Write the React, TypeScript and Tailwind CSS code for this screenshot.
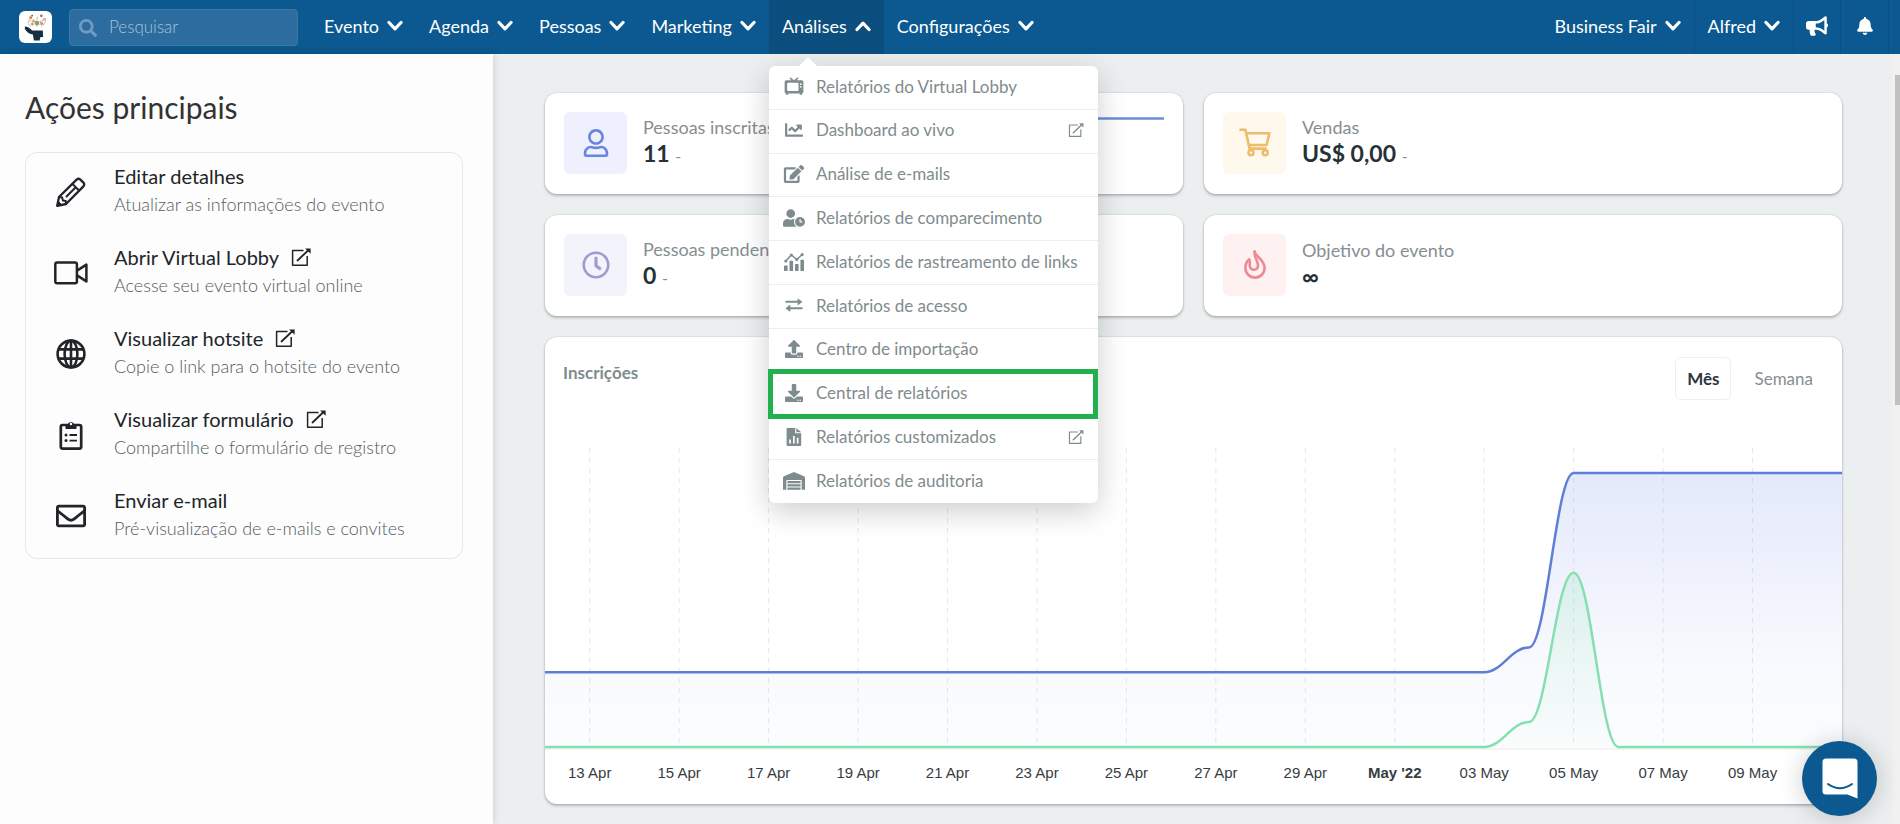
import type { ReactNode } from "react";
import {
  FaBell,
  FaBullhorn,
  FaChartLine,
  FaDownload,
  FaEdit,
  FaRegClock,
  FaRegEnvelope,
  FaRegUser,
  FaSearch,
  FaUpload,
  FaUserClock,
  FaWarehouse,
} from "react-icons/fa";

type IconProps = { className?: string };

/* Icons */

function Chevron({ up = false }: { up?: boolean }) {
  return (
    <svg viewBox="0 0 16 12" className="w-4 h-3" fill="none" stroke="currentColor" strokeWidth="3.2" strokeLinecap="round" strokeLinejoin="round">
      <path d={up ? "M2 9.5 8 3.2l6 6.3" : "M2 2.5l6 6.3 6-6.3"} />
    </svg>
  );
}

function ExternalIcon({ className }: IconProps) {
  return (
    <svg viewBox="0 0 20 18" className={className} fill="none" stroke="currentColor" strokeWidth="1.5" strokeLinejoin="round">
      <path d="M12.5 2.6H1.6v14.6h14.6V8" />
      <path d="M6.5 12.5 17 2.5" strokeLinecap="round" strokeWidth="1.8" />
      <path d="M14 .4h5.6v5.4z" fill="currentColor" stroke="none" />
    </svg>
  );
}

function PencilIcon({ className }: IconProps) {
  return (
    <svg viewBox="0 0 30 30" className={className} fill="none" stroke="currentColor" strokeWidth="2.3" strokeLinejoin="round" strokeLinecap="round">
      <path d="M1.2 28.8 3 20 20.6 2.6q1.9-1.6 3.8 0l3 3q1.6 1.9 0 3.8L10 27z" />
      <path d="M3 20l3.2.4.6 3 3 .6.2 3M16.5 7l6.5 6.5M10.5 19.5l8-8" strokeWidth="2" />
      <path d="M1.2 28.8l1-4.6 3.6 3.6z" fill="currentColor" strokeWidth="1" />
    </svg>
  );
}

function VideoIcon({ className }: IconProps) {
  return (
    <svg viewBox="0 0 34 30" className={className} fill="none" stroke="currentColor" strokeWidth="2.5" strokeLinejoin="round">
      <rect x="1.3" y="4.6" width="21.6" height="20.6" rx="1.8" />
      <path d="M23 12.6 32.4 6.6v16.8L23 17.4" />
    </svg>
  );
}

function GlobeIcon({ className }: IconProps) {
  return (
    <svg viewBox="0 0 30 30" className={className} fill="none" stroke="currentColor" strokeWidth="2.6">
      <circle cx="15" cy="15" r="13.4" />
      <ellipse cx="15" cy="15" rx="6.4" ry="13.4" />
      <path d="M15 1.6v26.8M2.6 10.4h24.8M2.6 19.6h24.8" />
    </svg>
  );
}

function ClipboardIcon({ className }: IconProps) {
  return (
    <svg viewBox="0 0 24 30" className={className} fill="none" stroke="currentColor" strokeWidth="2.7">
      <rect x="1.8" y="5" width="20.4" height="23.6" rx="1.8" />
      <path d="M6.5 9V4.6h2.2a3.4 3.4 0 0 1 6.6 0h2.2V9z" fill="currentColor" stroke="none" />
      <circle cx="12" cy="4" r="1.2" fill="#fff" stroke="none" />
      <path d="M10.5 15h7.5M10.5 20.6h7.5" strokeWidth="1.8" />
      <circle cx="7" cy="15" r="1.5" fill="currentColor" stroke="none" />
      <circle cx="7" cy="20.6" r="1.5" fill="currentColor" stroke="none" />
    </svg>
  );
}

function CartIcon({ className }: IconProps) {
  return (
    <svg viewBox="0 0 32 29" className={className} fill="none" stroke="currentColor" strokeWidth="2.6" strokeLinejoin="round">
      <path d="M.4 1.8h6l4.2 18.8h17M7.4 5.2h23L27.6 17H9.8" />
      <circle cx="12" cy="24.8" r="2.5" />
      <circle cx="26.2" cy="24.8" r="2.5" />
    </svg>
  );
}

function FlameIcon({ className }: IconProps) {
  return (
    <svg viewBox="0 0 22 29" className={className} fill="none" stroke="currentColor" strokeWidth="2.6" strokeLinejoin="round" strokeLinecap="round">
      <path d="M10.6 1.6C10.8 6 20.6 9.4 20.6 18a9.6 9.6 0 0 1-19.2 0c0-4 1.4-6.4 3.4-8.2" />
      <path d="M10.6 1.6C10 7.4 13.8 10.6 14 15.2c.2 6-8 5.8-8.2.4-.1-2.4.6-4.2-.6-6.2" />
    </svg>
  );
}

function RetroTvIcon({ className }: IconProps) {
  return (
    <svg viewBox="0 1 20 18.4" className={className} fill="currentColor">
      <path d="M6.4 1.2 10 4.3l3.600-3.100 1 1.300L12.600 4.400H18a1.600 1.600 0 0 1 1.600 1.600v10.200a1.600 1.600 0 0 1-1.300 1.600v1.400h-2.400v-1.400H4.100v1.400H1.700v-1.400A1.600 1.600 0 0 1 .4 16.200V6A1.600 1.600 0 0 1 2 4.400h5.400L5.400 2.500zM4.200 6.800a1.200 1.200 0 0 0-1.200 1.200v6.200a1.200 1.200 0 0 0 1.200 1.200h9.200a1.200 1.200 0 0 0 1.200-1.200V8a1.200 1.200 0 0 0-1.200-1.200z" fillRule="evenodd" />
      <circle cx="17" cy="8.3" r=".9" fill="#fff" />
      <circle cx="17" cy="11" r=".9" fill="#fff" />
    </svg>
  );
}

function AnalyticsIcon({ className }: IconProps) {
  return (
    <svg viewBox="0 1 20 18" className={className} fill="currentColor">
      <rect x="0" y="13.6" width="3.6" height="5.4" rx=".6" />
      <rect x="5.5" y="8.8" width="3.6" height="10.2" rx=".6" />
      <rect x="11" y="12" width="3.6" height="7" rx=".6" />
      <rect x="16.4" y="7.8" width="3.6" height="11.2" rx=".6" />
      <path d="M1.8 9 7.3 3l5.5 4.5 5.4-5" fill="none" stroke="currentColor" strokeWidth="1.5" />
      <circle cx="1.8" cy="9" r="1.6" />
      <circle cx="7.3" cy="3" r="1.6" />
      <circle cx="12.8" cy="7.4" r="1.6" />
      <circle cx="18.2" cy="2.6" r="1.6" />
    </svg>
  );
}

function ExchangeIcon({ className }: IconProps) {
  return (
    <svg viewBox="0 0 20 20" className={className} fill="currentColor">
      <path d="M1 5.400h13V3.400q0-1 .8-.4l4 3q.6.500 0 1l-4 3q-.8.600-.8-.4V7.500H1q-.6 0-.6-.5V5.900Q.4 5.400 1 5.400z" />
      <path d="M19 12.500H6v-2q0-1-.8-.4l-4 3q-.6.500 0 1l4 3q.8.600.8-.4v-2.100h13q.6 0 .6-.5v-1.100q0-.5-.6-.5z" />
    </svg>
  );
}

function FileChartIcon({ className }: IconProps) {
  return (
    <svg viewBox="0 1 20 18" className={className} fill="currentColor">
      <path d="M3.600 1h7.600v5.200h6V18q0 1-1 1H3.600q-1 0-1-1V2q0-1 1-1zM5.200 12.400v4h1.700v-4zM9 9v7.400h1.700V9zM12.800 10.800v5.600h1.700v-5.600z" fillRule="evenodd" />
      <path d="M12.400 1l4.800 4.200h-4.800z" />
    </svg>
  );
}

function HeadLogo() {
  return (
    <svg viewBox="0 0 33 32" className="w-8 h-8">
      <path d="M5 15.500q4 .2 7.500 4.200h11l.4 6.500-3 .4-.6 3.400h-6l-1-6.200q-5-.6-8.300-5.800z" fill="#17303f" />
      <path d="M11 15.500q-4.500-4-.5-8.500M22 15.500q6-4 3.500-9.500M13.500 14.500V11M17.500 15.500V8M20.500 14l1.500-4M10 9.500l6 1.500M24 9l-5 2" fill="none" stroke="#a58d6d" strokeWidth=".8" strokeDasharray="1.500 .7" />
      <circle cx="11" cy="6.5" r="1.5" fill="#c98561" />
      <circle cx="14" cy="9.5" r="1.3" fill="#d8a45e" />
      <circle cx="17.5" cy="12" r="2.4" fill="#8f9a83" />
      <circle cx="22" cy="4.5" r="1.5" fill="#cd6a56" />
      <circle cx="25" cy="8" r="1.3" fill="#e0a78f" />
      <circle cx="22.5" cy="12.5" r="1.4" fill="#c98561" />
      <circle cx="12.5" cy="13" r="1.3" fill="#b9a55e" />
      <circle cx="12.5" cy="4.2" r=".9" fill="#44535c" />
      <circle cx="18" cy="6.5" r="1" fill="#e2bd85" />
    </svg>
  );
}

/* Header */

const menuItems = [
  { label: "Relatórios do Virtual Lobby", icon: RetroTvIcon },
  { label: "Dashboard ao vivo", icon: FaChartLine, external: true },
  { label: "Análise de e-mails", icon: FaEdit },
  { label: "Relatórios de comparecimento", icon: FaUserClock },
  { label: "Relatórios de rastreamento de links", icon: AnalyticsIcon },
  { label: "Relatórios de acesso", icon: ExchangeIcon },
  { label: "Centro de importação", icon: FaUpload },
  { label: "Central de relatórios", icon: FaDownload, highlighted: true },
  { label: "Relatórios customizados", icon: FileChartIcon, external: true },
  { label: "Relatórios de auditoria", icon: FaWarehouse },
];

function AnalyticsMenu() {
  return (
    <div className="absolute left-0 top-full mt-3 w-[329px] z-20">
      <div className="absolute left-[30px] -top-[9px] border-x-[9px] border-b-[9px] border-x-transparent border-b-white" />
      <ul className="flex flex-col h-[437px] rounded-md bg-white text-[17px] text-[#7f8c8d] shadow-[0_8px_30px_rgba(0,0,0,0.2)]">
        {menuItems.map(({ label, icon: Icon, external, highlighted }) => (
          <li key={label} className="relative flex-1 border-b border-[#ebedee] last:border-b-0">
            <a href="#" className="flex items-center h-full px-[14px] pb-0.5 whitespace-nowrap">
              <Icon className="w-[22px] h-[18px] mr-[11px] shrink-0" />
              {label}
              {external && <ExternalIcon className="w-4 h-[14px] ml-auto" />}
            </a>
            {highlighted && (
              <span className="absolute -inset-y-1 -left-px right-0 border-[5px] border-[#22b04f] pointer-events-none" />
            )}
          </li>
        ))}
      </ul>
    </div>
  );
}

function NavButton({ children, open = false }: { children: ReactNode; open?: boolean }) {
  return (
    <button
      type="button"
      aria-expanded={open}
      className={`flex items-center gap-2 h-full px-[13px] pb-0.5 text-white ${open ? "bg-[#0c4e7e]" : ""}`}
    >
      {children}
      <Chevron up={open} />
    </button>
  );
}

function Header() {
  return (
    <header className="flex items-center h-[54px] pl-[19px] pr-[11px] bg-[#0b5990] text-white">
      <a href="#" aria-label="Início" className="flex items-center justify-center w-[33px] h-8 rounded-md bg-white">
        <HeadLogo />
      </a>
      <div className="relative ml-[17px] mr-[13px]">
        <FaSearch className="absolute left-[10px] top-[10px] w-[18px] h-[18px] text-[#6f9cc0]" />
        <input
          type="search"
          aria-label="Pesquisar"
          placeholder="Pesquisar"
          className="w-[229px] h-[37px] pl-[39px] pb-0.5 rounded border border-[#3a78a6] bg-[#2c6c9e] text-[17px] font-light placeholder:text-[#a9c4da]"
        />
      </div>
      <nav className="flex items-center h-full">
        <NavButton>Evento</NavButton>
        <NavButton>Agenda</NavButton>
        <NavButton>Pessoas</NavButton>
        <NavButton>Marketing</NavButton>
        <div className="relative h-full">
          <NavButton open>Análises</NavButton>
          <AnalyticsMenu />
        </div>
        <NavButton>Configurações</NavButton>
      </nav>
      <div className="flex items-center h-full ml-auto divide-x divide-[#0a4f80] border-r border-[#0a4f80]">
        <NavButton>Business Fair</NavButton>
        <NavButton>Alfred</NavButton>
        <button type="button" aria-label="Novidades" className="flex items-center justify-center w-[47px] h-full pb-0.5">
          <FaBullhorn className="w-[22px] h-5" />
        </button>
        <button type="button" aria-label="Notificações" className="flex items-center justify-center w-[47px] h-full pb-0.5">
          <FaBell className="w-[18px] h-[18px]" />
        </button>
      </div>
    </header>
  );
}

/* Sidebar */

const actions = [
  { title: "Editar detalhes", text: "Atualizar as informações do evento", icon: PencilIcon },
  { title: "Abrir Virtual Lobby", text: "Acesse seu evento virtual online", icon: VideoIcon, external: true },
  { title: "Visualizar hotsite", text: "Copie o link para o hotsite do evento", icon: GlobeIcon, external: true },
  { title: "Visualizar formulário", text: "Compartilhe o formulário de registro", icon: ClipboardIcon, external: true },
  { title: "Enviar e-mail", text: "Pré-visualização de e-mails e convites", icon: FaRegEnvelope },
];

function Sidebar() {
  return (
    <aside className="w-[493px] shrink-0 pl-[25px] pr-[30px] pt-8 bg-[#fdfdfd] shadow-[0_0_8px_rgba(0,0,0,0.15)]">
      <h1 className="text-[30px] leading-[42px] text-[#333]">Ações principais</h1>
      <ul className="mt-6 rounded-xl border border-[#e6e7e8]">
        {actions.map(({ title, text, icon: Icon, external }) => (
          <li key={title}>
            <a href="#" className="flex items-start h-[81px] pt-[9px] pl-7 text-[#212529]">
              <Icon className="w-[34px] h-[30px] mt-[15px] mr-[26px] shrink-0" />
              <span>
                <span className="flex items-center gap-3 text-[20px] leading-7">
                  {title}
                  {external && <ExternalIcon className="w-5 h-[18px]" />}
                </span>
                <span className="block leading-7 font-light text-[#555b60]">{text}</span>
              </span>
            </a>
          </li>
        ))}
      </ul>
    </aside>
  );
}

/* Dashboard */

const cardClass = "rounded-xl bg-white shadow-[0_2px_3px_rgba(0,0,0,0.22),0_0_2px_rgba(0,0,0,0.2)]";

type StatCardProps = {
  label: string;
  value: string;
  note?: string;
  tile: string;
  icon: ReactNode;
  children?: ReactNode;
};

function StatCard({ label, value, note, tile, icon, children }: StatCardProps) {
  return (
    <section className={`flex items-center px-[19px] pb-0.5 h-[101px] ${cardClass}`}>
      <div className={`flex items-center justify-center w-[63px] h-[62px] rounded-md ${tile}`}>{icon}</div>
      <div className="ml-4 pb-0.5">
        <p className="leading-6 text-[#868e91]">{label}</p>
        <p className="text-[23px] leading-7 font-bold text-[#263238]">
          {value} {note && <span className="text-base font-normal text-[#868e91]">{note}</span>}
        </p>
      </div>
      {children}
    </section>
  );
}

const dates = [
  "13 Apr", "15 Apr", "17 Apr", "19 Apr", "21 Apr", "23 Apr", "25 Apr",
  "27 Apr", "29 Apr", "May '22", "03 May", "05 May", "07 May", "09 May",
];

const CHART_HEIGHT = 302;
const CHART_BASE = 299;
const UNIT = 24.9;

// one value per day, 12 Apr to 11 May
const total = [...Array(22).fill(3), 4, ...Array(7).fill(11)];
const daily = [...Array(22).fill(0), 1, 7, ...Array(6).fill(0)];

function smoothPath(values: number[]) {
  const step = 1300 / (values.length - 1);
  return values
    .map((value, i) => {
      const x = i * step;
      const y = CHART_BASE - value * UNIT;
      if (i === 0) return `M${x} ${y}`;
      const prevX = x - step;
      const prevY = CHART_BASE - values[i - 1] * UNIT;
      const bend = step * 0.4;
      return `C${prevX + bend} ${prevY} ${x - bend} ${y} ${x} ${y}`;
    })
    .join("");
}

function RegistrationsChart() {
  const totalPath = smoothPath(total);
  const dailyPath = smoothPath(daily);
  const close = `V${CHART_BASE}H0Z`;

  return (
    <svg viewBox={`0 0 1300 ${CHART_HEIGHT}`} preserveAspectRatio="none" className="block w-full h-[302px]" fill="none">
      <defs>
        <linearGradient id="totalFill" x1="0" y1="0" x2="0" y2="1">
          <stop offset="0" stopColor="#5f7fea" stopOpacity="0.17" />
          <stop offset="0.7" stopColor="#5f7fea" stopOpacity="0.04" />
          <stop offset="1" stopColor="#5f7fea" stopOpacity="0.02" />
        </linearGradient>
        <linearGradient id="dailyFill" x1="0" y1="0" x2="0" y2="1">
          <stop offset="0" stopColor="#7ddfa8" stopOpacity="0.2" />
          <stop offset="1" stopColor="#7ddfa8" stopOpacity="0.02" />
        </linearGradient>
      </defs>
      {dates.map((date, i) => {
        const x = ((i * 2 + 1) * 1300) / 29;
        return (
          <path key={date} d={`M${x} 0V${CHART_BASE}`} stroke="#e6e7ea" strokeDasharray="5 5" vectorEffect="non-scaling-stroke" />
        );
      })}
      <path d={`M0 ${CHART_BASE + 2}H1300`} stroke="#e8e8e8" vectorEffect="non-scaling-stroke" />
      <path d={totalPath + close} fill="url(#totalFill)" />
      <path d={dailyPath + close} fill="url(#dailyFill)" />
      <path d={totalPath} stroke="#5f7fd6" strokeWidth="2.5" vectorEffect="non-scaling-stroke" />
      <path d={dailyPath} stroke="#86dfae" strokeWidth="2.5" vectorEffect="non-scaling-stroke" />
    </svg>
  );
}

function Dashboard() {
  return (
    <main className="flex-1 pl-[52px] pr-[50px] pt-[39px] pb-[19px]">
      <div className="grid grid-cols-2 gap-[21px]">
        <StatCard
          label="Pessoas inscritas"
          value="11"
          note="-"
          tile="bg-[#eef0fe] text-[#6a83de]"
          icon={<FaRegUser className="w-7 h-7" />}
        >
          <svg viewBox="0 0 200 60" preserveAspectRatio="none" className="w-[200px] h-[60px] ml-auto" fill="none">
            <path d="M0 5.500h200" stroke="#6f8ad8" strokeWidth="2.500" />
          </svg>
        </StatCard>
        <StatCard
          label="Vendas"
          value="US$ 0,00"
          note="-"
          tile="bg-[#fff8ec] text-[#ecbd6b]"
          icon={<CartIcon className="w-8 h-[29px]" />}
        />
        <StatCard
          label="Pessoas pendentes"
          value="0"
          note="-"
          tile="bg-[#f3f3fc] text-[#9f9bd0]"
          icon={<FaRegClock className="w-7 h-7" />}
        />
        <StatCard
          label="Objetivo do evento"
          value="∞"
          tile="bg-[#fef1f2] text-[#ef8a94]"
          icon={<FlameIcon className="w-[22px] h-[29px]" />}
        />
      </div>

      <section className={`mt-[21px] overflow-hidden ${cardClass}`}>
        <div className="flex items-start justify-between pt-5 px-[18px] text-[17px]">
          <h2 className="leading-8 font-bold text-[#7f8c8d]">Inscrições</h2>
          <div className="flex gap-3">
            <button type="button" className="h-[43px] px-[11px] rounded-md border border-[#eeeff0] font-bold text-[#2d3440]">
              Mês
            </button>
            <button type="button" className="h-[43px] px-[11px] text-[#868e91]">
              Semana
            </button>
          </div>
        </div>
        <div className="mt-12">
          <RegistrationsChart />
        </div>
        <div className="grid grid-cols-[repeat(14,2fr)_1fr] mt-[11px] mb-[19px] font-['Liberation_Sans',sans-serif] text-[15px] leading-6 text-[#373d3f] text-center">
          {dates.map((date) => (
            <span key={date} className={date.includes("'") ? "font-bold" : ""}>
              {date}
            </span>
          ))}
        </div>
      </section>
    </main>
  );
}

function ChatButton() {
  return (
    <button
      type="button"
      aria-label="Abrir chat"
      className="fixed right-[23px] bottom-2 z-30 flex items-center justify-center w-[75px] h-[75px] rounded-full bg-[#0b5990] shadow-[0_2px_24px_rgba(0,0,0,0.2)]"
    >
      <svg viewBox="0 0 36 41" className="w-9 h-[41px]">
        <path d="M4 .5h28a3.500 3.500 0 0 1 3.500 3.500v36.500L25.500 36.500H4A3.500 3.500 0 0 1 .5 33V4A3.500 3.500 0 0 1 4 .5z" fill="#fff" />
        <path d="M6 26q12 8.500 24 0" fill="none" stroke="#0b5990" strokeWidth="2" strokeLinecap="round" />
      </svg>
    </button>
  );
}

export default function App() {
  return (
    <div className="flex flex-col min-h-screen bg-[#ebeff0] font-[Lato,sans-serif] text-[18px]">
      <Header />
      <div className="flex flex-1">
        <Sidebar />
        <Dashboard />
        <div className="w-2 pt-[21px] pl-[3px] bg-[#f1f1f1]">
          <div className="h-[330px] bg-[#c1c1c1]" />
        </div>
      </div>
      <ChatButton />
    </div>
  );
}
